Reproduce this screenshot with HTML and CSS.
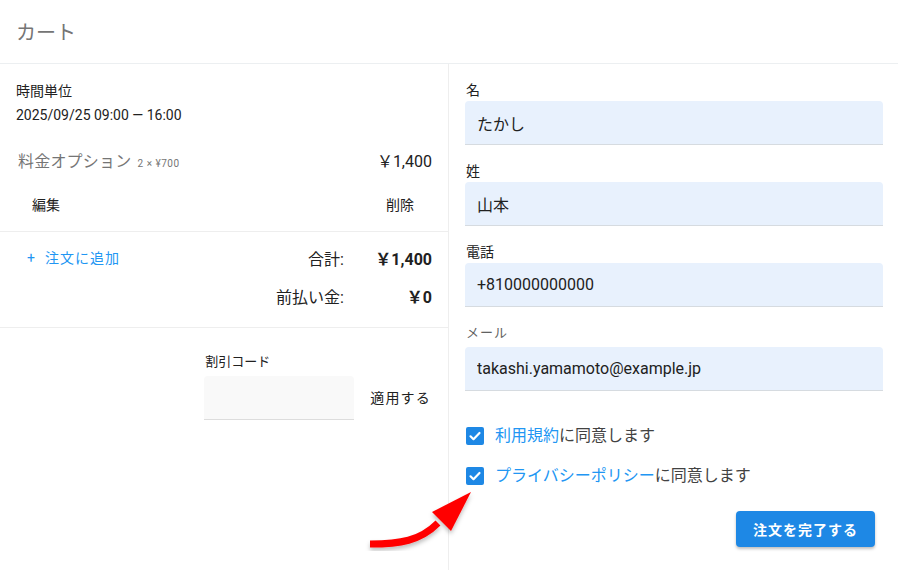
FILE: index.html
```html
<!DOCTYPE html>
<html lang="ja">
	<head>
		<meta charset="UTF-8" />
		<meta name="viewport" content="width=device-width, initial-scale=1.0" />
		<title>カート</title>
		<link rel="stylesheet" href="styles.css">
	</head>
	<body>
		<header class="top">カート</header>
		<main class="cart">
			<section class="summary">
				<div class="slot">
					<p class="slot_name">時間単位</p>
					<p class="slot_time">2025/09/25 09:00 — 16:00</p>
				</div>
				<div class="option">
					<span class="option_name">料金オプション <small>2 × ¥700</small></span>
					<span class="option_price">￥1,400</span>
				</div>
				<div class="actions">
					<span>編集</span>
					<span>削除</span>
				</div>
				<div class="totals">
					<a class="add" href="#">+&nbsp;&nbsp;注文に追加</a>
					<div class="sums">
						<div class="sum_row">
							<span class="sum_label">合計:</span>
							<span class="sum_value">￥1,400</span>
						</div>
						<div class="sum_row">
							<span class="sum_label">前払い金:</span>
							<span class="sum_value">￥0</span>
						</div>
					</div>
				</div>
				<div class="coupon">
					<div class="coupon_field">
						<label class="coupon_label">割引コード</label>
						<input class="coupon_input" type="text" />
					</div>
					<span class="coupon_apply">適用する</span>
				</div>
			</section>
			<section class="form">
				<div class="field">
					<label>名</label>
					<input type="text" value="たかし" />
				</div>
				<div class="field">
					<label>姓</label>
					<input type="text" value="山本" />
				</div>
				<div class="field">
					<label>電話</label>
					<input type="text" value="+810000000000" />
				</div>
				<div class="field field_mail">
					<label>メール</label>
					<input type="text" value="takashi.yamamoto@example.jp" />
				</div>
				<div class="agree">
					<label class="check"><span class="box"><svg viewBox="0 0 18 18" width="18" height="18"><path d="M4.5 9.3l3 2.9 6-6.2" fill="none" stroke="#fff" stroke-width="2.2" stroke-linecap="round" stroke-linejoin="round"/></svg></span><span><a href="#">利用規約</a>に同意します</span></label>
					<label class="check"><span class="box"><svg viewBox="0 0 18 18" width="18" height="18"><path d="M4.5 9.3l3 2.9 6-6.2" fill="none" stroke="#fff" stroke-width="2.2" stroke-linecap="round" stroke-linejoin="round"/></svg></span><span><a href="#">プライバシーポリシー</a>に同意します</span></label>
				</div>
				<div class="submit_row">
					<button class="submit">注文を完了する</button>
				</div>
			</section>
		</main>

		<!-- 注釈の矢印 -->
		<svg class="arrow" viewBox="0 0 120 70" width="120" height="70">
			<defs>
				<filter id="sh" x="-20%" y="-20%" width="140%" height="160%">
					<feDropShadow dx="0" dy="3" stdDeviation="2" flood-color="#000" flood-opacity="0.25"/>
				</filter>
			</defs>
			<g filter="url(#sh)" fill="#ff0000">
				<path d="M10 63 C40 63 60 60 78 42" fill="none" stroke="#ff0000" stroke-width="7"/>
				<path d="M72 31 L111 11 L91 50 Z"/>
			</g>
		</svg>
	</body>
</html>
```

FILE: styles.css
```css
* {
	padding: 0;
	margin: 0;
	box-sizing: border-box;
}
body {
	width: 898px;
	height: 570px;
	overflow: hidden;
	position: relative;
	font-family: Roboto, "Noto Sans CJK JP", sans-serif;
	color: #212121;
	background: #fff;
}
a {
	text-decoration: none;
	color: #2196f3;
}

.top {
	height: 64px;
	padding: 0 16px;
	display: flex;
	align-items: center;
	font-size: 20px;
	color: #757575;
	border-bottom: 1px solid #eceff1;
}

.cart {
	display: flex;
	height: 506px;
}

/* 左側 */
.summary {
	width: 449px;
	border-right: 1px solid #eeeeee;
}
.slot {
	padding: 17px 16px 0;
	font-size: 14px;
}
.slot_name {
	line-height: 20px;
}
.slot_time {
	line-height: 28px;
}
.option {
	display: flex;
	justify-content: space-between;
	align-items: center;
	padding: 0 16px 0 18px;
	height: 46px;
	margin-top: 8px;
	font-size: 16px;
}
.option_name {
	color: #757575;
	letter-spacing: 0.2px;
}
.option_name small {
	font-size: 10px;
	margin-left: 2px;
	letter-spacing: 0.5px;
}
.option_price {
	font-size: 16px;
}
.actions {
	display: flex;
	justify-content: space-between;
	align-items: center;
	height: 49px;
	padding: 0 34px 7px 32px;
	font-size: 14px;
	border-bottom: 1px solid #eeeeee;
}
.totals {
	display: flex;
	justify-content: space-between;
	padding: 14px 16px 0 27px;
	height: 96px;
	border-bottom: 1px solid #eeeeee;
}
.add {
	font-size: 14px;
	letter-spacing: 1px;
	line-height: 24px;
}
.sum_row {
	display: flex;
	justify-content: flex-end;
	align-items: center;
	height: 38px;
	font-size: 16px;
}
.sum_row:first-child {
	margin-top: -7px;
}
.sum_label {
	text-align: right;
}
.sum_value {
	width: 88px;
	text-align: right;
	font-weight: bold;
}
.coupon {
	display: flex;
	justify-content: flex-end;
	align-items: flex-end;
	padding: 24px 17px 0 0;
}
.coupon_field {
	display: flex;
	flex-direction: column;
}
.coupon_label {
	font-size: 13px;
	line-height: 20px;
	padding-left: 1px;
	margin-bottom: 4px;
}
.coupon_input {
	width: 150px;
	height: 44px;
	border: 0;
	border-bottom: 1px solid #dddddd;
	border-radius: 4px 4px 0 0;
	background: #f9f9f9;
}
.coupon_apply {
	font-size: 14px;
	letter-spacing: 1.2px;
	margin: 0 0 13px 16px;
}

/* 右側 */
.form {
	flex: 1;
	padding: 16px 15px 0 16px;
}
.field {
	display: flex;
	flex-direction: column;
	margin-bottom: 16px;
}
.field label {
	font-size: 14px;
	line-height: 20px;
	margin-bottom: 1px;
	padding-left: 1px;
}
.field input {
	height: 44px;
	border: 0;
	border-bottom: 1px solid #d6dbe0;
	border-radius: 4px 4px 0 0;
	background: #e8f1fd;
	padding: 0 12px;
	font-family: Roboto, "Noto Sans CJK JP", sans-serif;
	font-size: 16px;
	color: #212121;
	outline: none;
}
.field_mail label {
	font-size: 13px;
	color: #616161;
	letter-spacing: 1px;
	margin-bottom: 4px;
}
.field_mail {
	margin-bottom: 35px;
}
.agree {
	display: flex;
	flex-direction: column;
	gap: 20px;
	padding-left: 1px;
}
.check {
	display: flex;
	align-items: center;
	gap: 11px;
	font-size: 16px;
	line-height: 20px;
	color: #424242;
}
.box {
	width: 18px;
	height: 18px;
	border-radius: 2px;
	background: #1e88e5;
	display: flex;
}
.submit_row {
	display: flex;
	justify-content: flex-end;
	padding: 25px 8px 0 0;
}
.submit {
	width: 139px;
	height: 36px;
	border: 0;
	border-radius: 4px;
	background: #1e88e5;
	color: #fff;
	font-family: Roboto, "Noto Sans CJK JP", sans-serif;
	font-size: 14px;
	font-weight: bold;
	letter-spacing: 1px;
	box-shadow: 0 2px 3px rgba(0, 0, 0, 0.25);
}

.arrow {
	position: absolute;
	left: 360px;
	top: 481px;
}
```
